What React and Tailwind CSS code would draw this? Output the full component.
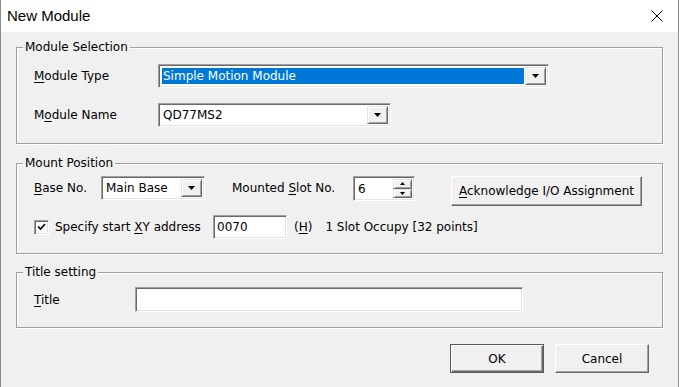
import React from 'react';

const sunken =
  'border border-t-[#a0a0a0] border-l-[#a0a0a0] border-b-white border-r-white shadow-[inset_1px_1px_0_#696969,inset_-1px_-1px_0_#e3e3e3] bg-white';
const raised =
  'border border-t-[#e3e3e3] border-l-[#e3e3e3] border-b-[#696969] border-r-[#696969] shadow-[inset_1px_1px_0_#ffffff,inset_-1px_-1px_0_#a0a0a0] bg-[#f0f0f0]';
const group =
  'mx-[15px] border border-[#a0a0a0] shadow-[inset_1px_1px_0_#ffffff,1px_1px_0_#ffffff]';

const Legend = ({ children }) => (
  <span className="block w-fit -mt-[8px] ml-[6px] px-[2px] h-[15px] leading-[15px] bg-[#f0f0f0]">
    {children}
  </span>
);

const Arrow = ({ w = 7, h = 4 }) => (
  <svg width={w} height={h} viewBox={`0 0 ${w} ${h}`}>
    <path d={`M0 0H${w}L${w / 2} ${h}Z`} fill="#000" />
  </svg>
);

const Combo = ({ width, value, selected }) => (
  <div className={`${width} h-[24px] flex p-[2px] ${sunken}`}>
    <div className="flex-1 flex p-[1px]">
      <div className={`flex-1 flex items-center pl-[1px] ${selected ? 'bg-[#0078d7] text-white' : ''}`}>
        {value}
      </div>
    </div>
    <div className={`w-[21px] flex items-center justify-center ${raised}`}>
      <Arrow />
    </div>
  </div>
);

const U = ({ children }) => <span className="underline underline-offset-2">{children}</span>;

export default function App() {
  return (
    <div className="w-[679px] h-[387px] bg-[#f0f0f0] border-x border-[#8c8c8c] flex flex-col font-['DejaVu_Sans',Tahoma,sans-serif] text-[12px] text-black overflow-hidden">
      {/* title bar */}
      <div className="h-[32px] shrink-0 bg-white flex items-center justify-between pl-[6px] pr-[15px]">
        <span className="text-[15px] font-['Liberation_Sans',Arial,sans-serif]">New Module</span>
        <svg width="12" height="12" viewBox="0 0 12 12">
          <path d="M0.5 0.5L11.5 11.5M11.5 0.5L0.5 11.5" stroke="#000" strokeWidth="1" />
        </svg>
      </div>

      {/* Module Selection */}
      <div className={`mt-[15px] pl-[17px] pb-[16px] ${group}`}>
        <div className="-ml-[17px]">
          <Legend>Module Selection</Legend>
        </div>
        <div className="mt-[9px] flex items-center">
          <span className="w-[124px]">
            <U>M</U>odule Type
          </span>
          <Combo width="w-[391px]" value="Simple Motion Module" selected />
        </div>
        <div className="mt-[15px] flex items-center">
          <span className="w-[124px]">
            M<U>o</U>dule Name
          </span>
          <Combo width="w-[233px]" value="QD77MS2" />
        </div>
      </div>

      {/* Mount Position */}
      <div className={`mt-[19px] pl-[17px] pb-[14px] ${group}`}>
        <div className="-ml-[17px]">
          <Legend>Mount Position</Legend>
        </div>
        <div className="mt-[5px] flex items-start">
          <span className="w-[67px] h-[24px] flex items-center">
            <span>
              <U>B</U>ase No.
            </span>
          </span>
          <Combo width="w-[104px]" value="Main Base" />
          <span className="ml-[27px] w-[121px] h-[24px] flex items-center">
            <span>
              Mounted <U>S</U>lot No.
            </span>
          </span>
          <div className={`w-[62px] h-[25px] flex p-[2px] ${sunken}`}>
            <div className="flex-1 flex items-center pl-[2px]">6</div>
            <div className="w-[19px] flex flex-col">
              <div className={`flex-1 flex items-center justify-center ${raised}`}>
                <svg width="5" height="3" viewBox="0 0 5 3">
                  <path d="M0 3H5L2.5 0Z" fill="#000" />
                </svg>
              </div>
              <div className={`flex-1 flex items-center justify-center ${raised}`}>
                <Arrow w={5} h={3} />
              </div>
            </div>
          </div>
          <button className="ml-[36px] w-[191px] h-[30px] flex items-center justify-center border border-t-white border-l-white border-b-[#696969] border-r-[#696969] shadow-[inset_-1px_-1px_0_#a0a0a0] bg-[#f0f0f0]">
            <span>
              <U>A</U>cknowledge I/O Assignment
            </span>
          </button>
        </div>
        <div className="mt-[9px] flex items-center">
          <div className={`w-[15px] h-[15px] flex items-center justify-center ${sunken}`}>
            <svg width="9" height="8" viewBox="0 0 9 8">
              <path d="M1 3.5L3.5 6L8 1" stroke="#000" strokeWidth="1.6" fill="none" />
            </svg>
          </div>
          <span className="ml-[6px] w-[158px]">
            Specify start <U>X</U>Y address
          </span>
          <div className={`w-[74px] h-[24px] flex items-center pl-[3px] ${sunken}`}>0070</div>
          <span className="ml-[7px]">
            (<U>H</U>)
          </span>
          <span className="ml-[13px]">1 Slot Occupy [32 points]</span>
        </div>
      </div>

      {/* Title setting */}
      <div className={`mt-[18px] pl-[17px] pb-[15px] ${group}`}>
        <div className="-ml-[17px]">
          <Legend>Title setting</Legend>
        </div>
        <div className="mt-[7px] flex items-center">
          <span className="w-[101px]">
            <U>T</U>itle
          </span>
          <div className={`w-[388px] h-[25px] ${sunken}`} />
        </div>
      </div>

      {/* buttons */}
      <div className="mt-[16px] flex justify-end gap-[11px] pr-[29px]">
        <button className="w-[94px] h-[29px] flex items-center justify-center border border-[#5a5a5a] shadow-[inset_1px_1px_0_#ffffff,inset_-1px_-1px_0_#696969,inset_-2px_-2px_0_#a0a0a0] bg-[#f0f0f0]">
          OK
        </button>
        <button className="w-[94px] h-[29px] flex items-center justify-center border border-t-white border-l-white border-b-[#696969] border-r-[#696969] shadow-[inset_-1px_-1px_0_#a0a0a0] bg-[#f0f0f0]">
          Cancel
        </button>
      </div>
    </div>
  );
}
